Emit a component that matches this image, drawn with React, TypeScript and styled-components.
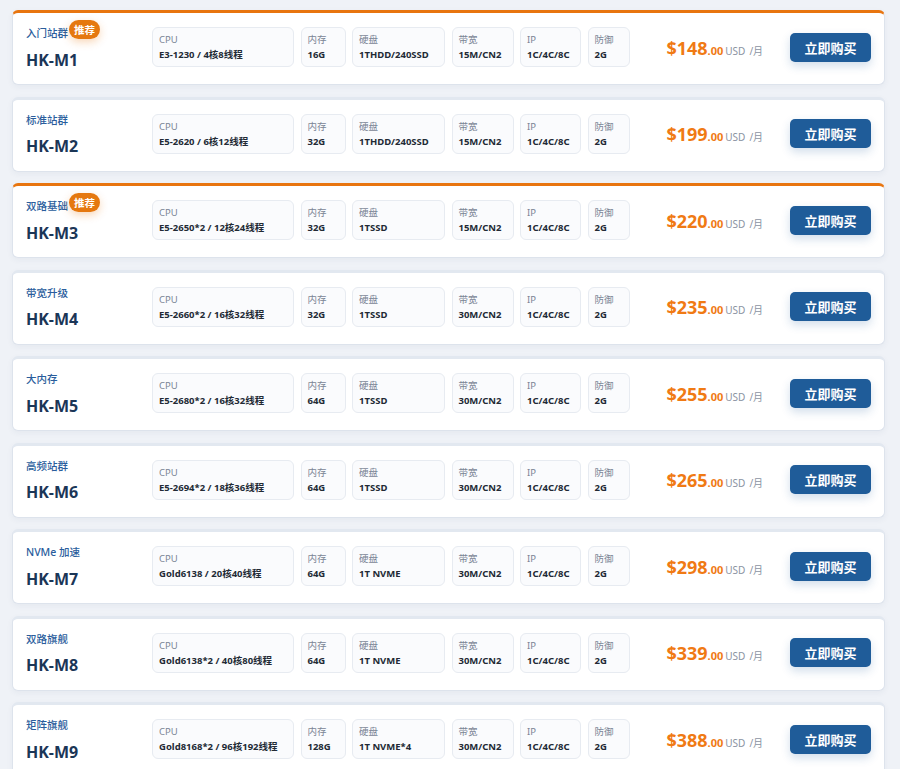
import React from "react";
import styled, { createGlobalStyle } from "styled-components";

const GlobalStyle = createGlobalStyle`
  body {
    margin: 0;
    background: #eff2f7;
    font-family: "Noto Sans", "Noto Sans CJK SC", sans-serif;
  }
`;

interface Plan {
  name: string;
  tag: string;
  hot?: boolean;
  cpu: string;
  ram: string;
  disk: string;
  bw: string;
  ip: string;
  ddos: string;
  price: number;
}

const plans: Plan[] = [
  { name: "HK-M1", tag: "入门站群", hot: true, cpu: "E3-1230 / 4核8线程", ram: "16G", disk: "1THDD/240SSD", bw: "15M/CN2", ip: "1C/4C/8C", ddos: "2G", price: 148 },
  { name: "HK-M2", tag: "标准站群", cpu: "E5-2620 / 6核12线程", ram: "32G", disk: "1THDD/240SSD", bw: "15M/CN2", ip: "1C/4C/8C", ddos: "2G", price: 199 },
  { name: "HK-M3", tag: "双路基础", hot: true, cpu: "E5-2650*2 / 12核24线程", ram: "32G", disk: "1TSSD", bw: "15M/CN2", ip: "1C/4C/8C", ddos: "2G", price: 220 },
  { name: "HK-M4", tag: "带宽升级", cpu: "E5-2660*2 / 16核32线程", ram: "32G", disk: "1TSSD", bw: "30M/CN2", ip: "1C/4C/8C", ddos: "2G", price: 235 },
  { name: "HK-M5", tag: "大内存", cpu: "E5-2680*2 / 16核32线程", ram: "64G", disk: "1TSSD", bw: "30M/CN2", ip: "1C/4C/8C", ddos: "2G", price: 255 },
  { name: "HK-M6", tag: "高频站群", cpu: "E5-2694*2 / 18核36线程", ram: "64G", disk: "1TSSD", bw: "30M/CN2", ip: "1C/4C/8C", ddos: "2G", price: 265 },
  { name: "HK-M7", tag: "NVMe 加速", cpu: "Gold6138 / 20核40线程", ram: "64G", disk: "1T NVME", bw: "30M/CN2", ip: "1C/4C/8C", ddos: "2G", price: 298 },
  { name: "HK-M8", tag: "双路旗舰", cpu: "Gold6138*2 / 40核80线程", ram: "64G", disk: "1T NVME", bw: "30M/CN2", ip: "1C/4C/8C", ddos: "2G", price: 339 },
  { name: "HK-M9", tag: "矩阵旗舰", cpu: "Gold8168*2 / 96核192线程", ram: "128G", disk: "1T NVME*4", bw: "30M/CN2", ip: "1C/4C/8C", ddos: "2G", price: 388 },
];

export default function App() {
  return (
    <>
      <GlobalStyle />
      <List>
        {plans.map((p) => (
          <Card key={p.name} $hot={p.hot}>
            <Head>
              <TagRow>
                <Tag>{p.tag}</Tag>
                {p.hot && <Badge>推荐</Badge>}
              </TagRow>
              <Name>{p.name}</Name>
            </Head>
            <Specs>
              <Spec $w={142}>
                <Label>CPU</Label>
                <Value>{p.cpu}</Value>
              </Spec>
              <Spec $w={45}>
                <Label>内存</Label>
                <Value>{p.ram}</Value>
              </Spec>
              <Spec $w={93}>
                <Label>硬盘</Label>
                <Value>{p.disk}</Value>
              </Spec>
              <Spec $w={62}>
                <Label>带宽</Label>
                <Value>{p.bw}</Value>
              </Spec>
              <Spec $w={61}>
                <Label>IP</Label>
                <Value>{p.ip}</Value>
              </Spec>
              <Spec $w={42}>
                <Label>防御</Label>
                <Value>{p.ddos}</Value>
              </Spec>
            </Specs>
            <Price>
              <Amount>${p.price}</Amount>
              <Cents>.00</Cents>
              <Unit>USD</Unit>
              <Period>/月</Period>
            </Price>
            <BuyButton>立即购买</BuyButton>
          </Card>
        ))}
      </List>
    </>
  );
}

const List = styled.div`
  display: flex;
  flex-direction: column;
  gap: 11.5px;
  padding: 10px 15px 0 12px;
`;

const Card = styled.div<{ $hot?: boolean }>`
  display: flex;
  align-items: center;
  height: 75px;
  box-sizing: border-box;
  padding: 0 13px 0 13px;
  background: #ffffff;
  border: 1px solid #dde3ec;
  border-top: 3px solid ${(p) => (p.$hot ? "#e8750f" : "#e2e8f0")};
  border-radius: 6px;
  box-shadow: 0 2px 6px rgba(30, 50, 90, 0.05);
`;

const Head = styled.div`
  width: 126px;
  flex-shrink: 0;
  display: flex;
  flex-direction: column;
  gap: 7px;
  margin-top: -3px;
`;

const TagRow = styled.div`
  display: flex;
  align-items: center;
  gap: 1px;
  height: 18px;
`;

const Tag = styled.span`
  font-size: 10.5px;
  color: #2a5d9c;
  font-weight: 500;
`;

const Badge = styled.span`
  display: inline-flex;
  align-items: center;
  justify-content: center;
  height: 19px;
  padding: 0 5px;
  margin-top: -7px;
  border-radius: 10px;
  background: #e5780f;
  color: #ffffff;
  font-size: 10.5px;
  font-weight: 700;
  box-shadow: 0 3px 8px rgba(232, 120, 15, 0.3);
`;

const Name = styled.div`
  font-size: 16px;
  font-weight: 700;
  color: #1b3657;
`;

const Specs = styled.div`
  display: flex;
  gap: 6.5px;
  flex-shrink: 0;
  margin-top: -3px;
`;

const Spec = styled.div<{ $w: number }>`
  width: ${(p) => p.$w}px;
  height: 40px;
  box-sizing: border-box;
  padding: 5px 6px 0;
  background: #fafbfd;
  border: 1px solid #e7ebf1;
  border-radius: 6px;
  display: flex;
  flex-direction: column;
  gap: 1px;
`;

const Label = styled.span`
  font-size: 9.5px;
  color: #7b8595;
  line-height: 14px;
`;

const Value = styled.span`
  font-size: 9.5px;
  font-weight: 700;
  color: #222a35;
  line-height: 14px;
  white-space: nowrap;
`;

const Price = styled.div`
  flex: 1;
  display: flex;
  align-items: baseline;
  justify-content: center;
  padding-left: 10px;
  margin-top: -2px;
`;

const Amount = styled.span`
  font-size: 18px;
  font-weight: 700;
  color: #f07a14;
`;

const Cents = styled.span`
  font-size: 11px;
  font-weight: 700;
  color: #f07a14;
`;

const Unit = styled.span`
  font-size: 10px;
  color: #8a93a2;
  margin-left: 2px;
`;

const Period = styled.span`
  font-size: 10px;
  color: #8a93a2;
  margin-left: 4px;
`;

const BuyButton = styled.button`
  width: 81px;
  height: 29px;
  flex-shrink: 0;
  margin-top: -3px;
  border: none;
  border-radius: 5px;
  background: #1f5c99;
  color: #ffffff;
  font-family: "Noto Sans CJK SC", sans-serif;
  font-size: 13px;
  font-weight: 700;
  box-shadow: 0 4px 10px rgba(31, 92, 153, 0.2);
  cursor: pointer;
`;
